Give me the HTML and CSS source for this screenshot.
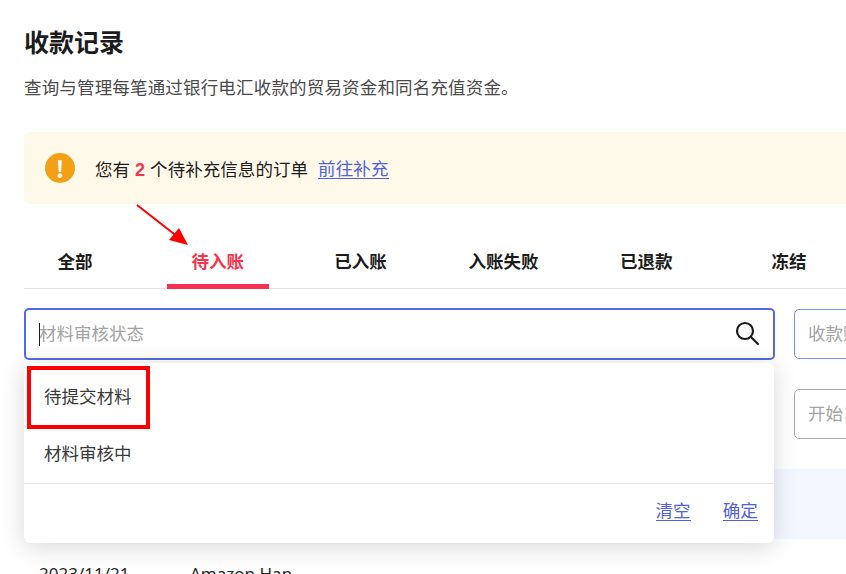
FILE: index.html
```html
<!DOCTYPE html>
<html lang="zh-CN">
<head>
<meta charset="utf-8">
<title>收款记录</title>
<link rel="stylesheet" href="styles.css">
</head>
<body>
<main class="page">
  <h1 class="title">收款记录</h1>
  <p class="subtitle">查询与管理每笔通过银行电汇收款的贸易资金和同名充值资金。</p>
  <div class="alert">
    <span class="alert-icon">!</span>
    <span class="alert-text">您有 <b class="count">2</b> 个待补充信息的订单</span>
    <a class="link" href="#">前往补充</a>
  </div>
  <nav class="tabs">
    <a class="tab">全部</a>
    <a class="tab active">待入账</a>
    <a class="tab">已入账</a>
    <a class="tab">入账失败</a>
    <a class="tab">已退款</a>
    <a class="tab">冻结</a>
  </nav>
  <section class="filters">
    <div class="select-wrap">
      <div class="field focus">
        <span class="caret"></span>
        <span class="placeholder">材料审核状态</span>
        <svg class="search" width="26" height="26" viewBox="0 0 26 26" fill="none" stroke="#1c1c1c" stroke-width="2.2">
          <circle cx="11" cy="11" r="8"/>
          <path d="M17 17l7 7" stroke-linecap="round"/>
        </svg>
      </div>
      <div class="dropdown">
        <ul class="options">
          <li class="option">待提交材料</li>
          <li class="option">材料审核中</li>
        </ul>
        <div class="actions">
          <a class="link" href="#">清空</a>
          <a class="link" href="#">确定</a>
        </div>
      </div>
    </div>
    <div class="field hover"><span class="placeholder">收款账户</span></div>
    <div class="spacer"></div>
    <div class="field plain"><span class="placeholder">开始日期</span></div>
  </section>
  <div class="table-head"></div>
  <div class="row"><span class="date">2023/11/21</span><span>Amazon Han</span></div>
</main>
<svg class="annotation arrow" width="60" height="50" viewBox="0 0 60 50">
  <path d="M1 1L42 33" stroke="#f00" stroke-width="2" fill="none"/>
  <path d="M52 41L33 36L43 24Z" fill="#f00"/>
</svg>
<div class="annotation redbox"></div>
</body>
</html>
```
FILE: styles.css
```css
html, body {
  margin: 0;
  height: 574px;
  overflow: hidden;
  background: #fff;
}
body {
  font-family: "Noto Sans CJK SC", "Liberation Sans", sans-serif;
  color: #1c1c1c;
  position: relative;
}
.page {
  width: 1300px;
  padding: 22px 0 0 24px;
  box-sizing: border-box;
}
.title {
  margin: 0;
  font-size: 25px;
  line-height: 38px;
  font-weight: 700;
}
.subtitle {
  margin: 15px 0 0;
  font-size: 17.5px;
  line-height: 24px;
  letter-spacing: 0.17px;
  color: #4a4a4a;
}
.alert {
  margin-top: 33px;
  height: 72px;
  display: flex;
  align-items: center;
  padding-left: 21px;
  background: #fff9ea;
  border-radius: 5px;
  font-size: 17.5px;
}
.alert-icon {
  width: 30px;
  height: 30px;
  border-radius: 50%;
  background: #f2a116;
  color: #fff;
  font-size: 23px;
  font-weight: 700;
  line-height: 30px;
  text-align: center;
  margin-right: 20px;
}
.alert-text {
  margin-right: 10px;
  letter-spacing: 0.05px;
}
.count {
  color: #f5334f;
  font-family: "Liberation Sans", sans-serif;
  font-size: 18px;
  margin: 0 1px;
}
.link {
  color: #4e62e0;
  text-decoration: none;
  border-bottom: 1px solid #4e62e0;
  line-height: 21px;
  letter-spacing: 0.12px;
}
.tabs {
  margin-top: 31px;
  height: 53px;
  display: flex;
  gap: 40.8px;
  border-bottom: 1px solid #e5e5e5;
}
.tab {
  width: 102px;
  height: 54px;
  box-sizing: border-box;
  padding-top: 13px;
  text-align: center;
  font-size: 17.5px;
  line-height: 26px;
  font-weight: 700;
}
.tab.active {
  color: #f5334f;
  border-bottom: 5px solid #f5334f;
}
.filters {
  margin-top: 19px;
  display: grid;
  grid-template-columns: 751px 400px;
  grid-template-rows: 52px 50px;
  column-gap: 19px;
  row-gap: 29px;
}
.select-wrap {
  position: relative;
}
.field {
  box-sizing: border-box;
  height: 50px;
  display: flex;
  align-items: center;
  padding: 0 0 3px 13px;
  border: 1px solid #a8a8a8;
  border-radius: 5px;
  font-size: 17.5px;
  position: relative;
}
.field.focus {
  height: 52px;
  border: 2px solid #5468e4;
  padding: 0 13px 3px 13px;
  justify-content: space-between;
}
.field.hover {
  border-color: #7a8ff0;
  margin-top: 1px;
}
.placeholder {
  color: #a3a3a3;
  white-space: nowrap;
}
.focus .placeholder {
  flex: 1;
}
.caret {
  position: absolute;
  left: 13px;
  top: 13px;
  width: 1px;
  height: 23px;
  background: #1c1c1c;
}
.search {
  display: block;
}
.dropdown {
  position: absolute;
  left: 0;
  right: 1px;
  top: 55px;
  height: 180px;
  background: #fff;
  border-radius: 6px;
  box-shadow: 0 4px 24px rgba(0, 0, 0, 0.16);
  display: flex;
  flex-direction: column;
  z-index: 2;
}
.options {
  list-style: none;
  margin: 0;
  padding: 4px 0 0;
  height: 116px;
  box-sizing: content-box;
  border-bottom: 1px solid #e5e5e5;
  color: #3a3a3a;
}
.option {
  height: 57px;
  line-height: 57px;
  padding-left: 20px;
  font-size: 17.5px;
}
.actions {
  display: flex;
  justify-content: flex-end;
  gap: 32px;
  padding: 15px 16px 0 0;
  font-size: 17.5px;
}
.table-head {
  margin-top: 30px;
  height: 70px;
  background: #f3f7ff;
}
.row {
  display: flex;
  padding: 23px 0 0 15px;
  font-size: 17px;
  line-height: 24px;
  color: #2a2a2a;
  font-family: "Noto Sans", "Liberation Sans", sans-serif;
}
.date {
  width: 151px;
}
.annotation {
  position: absolute;
  z-index: 5;
}
.arrow {
  left: 136px;
  top: 204px;
}
.redbox {
  left: 27px;
  top: 366px;
  width: 115px;
  height: 55px;
  border: 4px solid #f00;
}
```
